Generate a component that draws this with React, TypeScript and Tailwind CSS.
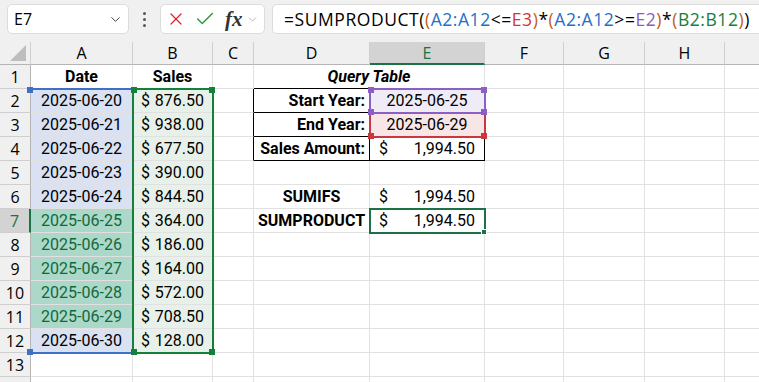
import React from "react";
import { Check, ChevronDown, X } from "lucide-react";

// Column widths in px: row header, A..I
const COLS = [31, 102, 80, 41, 116, 115, 79, 81, 80, 80];
const LETTERS = ["A", "B", "C", "D", "E", "F", "G", "H", "I"];
const ROWS = 14;
const HEADER_H = 23;
const ROW_H = 24;

const dates = [
  "2025-06-20",
  "2025-06-21",
  "2025-06-22",
  "2025-06-23",
  "2025-06-24",
  "2025-06-25",
  "2025-06-26",
  "2025-06-27",
  "2025-06-28",
  "2025-06-29",
  "2025-06-30",
];
const sales = ["876.50", "938.00", "677.50", "390.00", "844.50", "364.00", "186.00", "164.00", "572.00", "708.50", "128.00"];

const cellFont = { fontFamily: "Roboto, 'Liberation Sans', sans-serif" };

function Money({ value, wide }: { value: string; wide?: boolean }) {
  return (
    <div className={`flex h-full w-full items-center justify-between ${wide ? "px-[9px]" : "px-[8px]"}`}>
      <span>$</span>
      <span>{value}</span>
    </div>
  );
}

type Cell = { node?: React.ReactNode; border: string; bg: string; span?: number };

/** Content + styling for one data cell. Returns null when the cell is covered by a merge. */
function cellFor(row: number, col: number): Cell | null {
  // col: 1 = A ... 9 = I
  const tableBlack = row >= 2 && row <= 4 && (col === 4 || col === 5);
  let border = tableBlack ? "border-black" : "border-[#e1e1e1]";
  if (row >= 2 && row <= 4 && col === 3) border = "border-b-[#e1e1e1] border-r-black";
  const plain = (node?: React.ReactNode, bg = "bg-white"): Cell => ({ node, border, bg });

  if (row === 1) {
    if (col === 1) return plain(<div className="text-center font-bold">Date</div>);
    if (col === 2) return plain(<div className="text-center font-bold">Sales</div>);
    if (col === 4)
      return {
        node: <div className="text-center font-bold italic">Query Table</div>,
        border: "border-b-black border-r-[#e1e1e1]",
        bg: "bg-white",
        span: 2,
      };
    if (col === 5) return null;
  }
  if (row >= 2 && row <= 12) {
    const i = row - 2;
    if (col === 1) {
      const hit = row >= 7 && row <= 11;
      return plain(
        <div className="text-center">{dates[i]}</div>,
        hit ? "bg-[#acd8c9] text-[#11693a]" : "bg-[#d9e1f3]"
      );
    }
    if (col === 2) return plain(<Money value={sales[i]} />, "bg-[#e8f1e9]");
  }
  if (row === 2 && col === 4) return plain(<div className="pr-1 text-right font-bold">Start Year:</div>);
  if (row === 3 && col === 4) return plain(<div className="pr-1 text-right font-bold">End Year:</div>);
  if (row === 4 && col === 4) return plain(<div className="pr-1 text-right font-bold">Sales Amount:</div>);
  if (row === 2 && col === 5) return plain(<div className="text-center">2025-06-25</div>, "bg-[#efebf7]");
  if (row === 3 && col === 5) return plain(<div className="text-center">2025-06-29</div>, "bg-[#f8e6e6]");
  if (row === 4 && col === 5) return plain(<Money value="1,994.50" wide />);
  if (row === 6 && col === 4) return plain(<div className="text-center font-bold">SUMIFS</div>);
  if (row === 7 && col === 4) return plain(<div className="text-center font-bold">SUMPRODUCT</div>);
  if ((row === 6 || row === 7) && col === 5) return plain(<Money value="1,994.50" wide />);
  return plain();
}

type Corner = "tl" | "tr" | "bl" | "br";

const cornerCls: Record<Corner, string> = {
  tl: "-left-[3px] -top-[3px]",
  tr: "-right-[3px] -top-[3px]",
  bl: "-left-[3px] -bottom-[3px]",
  br: "-right-[3px] -bottom-[3px]",
};

/**
 * Coloured outline drawn over a cell range (formula reference highlight / active cell).
 * Its box is computed from the column & row indices.
 */
function RangeBox({
  c0,
  c1,
  r0,
  r1,
  borderCls,
  handleCls,
  handles,
}: {
  c0: number;
  c1: number;
  r0: number;
  r1: number;
  borderCls: string;
  handleCls: string;
  handles: Corner[];
}) {
  const left = COLS.slice(0, c0).reduce((a, b) => a + b, 0) - 1;
  const width = COLS.slice(c0, c1 + 1).reduce((a, b) => a + b, 0) + 2;
  const top = HEADER_H + (r0 - 1) * ROW_H - 1;
  const height = (r1 - r0 + 1) * ROW_H + 2;
  return (
    <div className={`pointer-events-none absolute ${borderCls}`} style={{ left, top, width, height }}>
      {handles.map((h) => (
        <span key={h} className={`absolute h-[6px] w-[6px] ${cornerCls[h]} ${handleCls}`} />
      ))}
    </div>
  );
}

function FormulaText() {
  const paren = "text-[#c55a11]";
  return (
    <span className="whitespace-nowrap">
      =SUMPRODUCT(
      <span className={paren}>(</span>
      <span className="text-[#1f6fc6]">A2:A12</span>
      {"<="}
      <span className="text-[#d2343a]">E3</span>
      <span className={paren}>)</span>*<span className={paren}>(</span>
      <span className="text-[#1f6fc6]">A2:A12</span>
      {">="}
      <span className="text-[#8a5cc0]">E2</span>
      <span className={paren}>)</span>*<span className={paren}>(</span>
      <span className="text-[#16803a]">B2:B12</span>
      <span className={paren}>)</span>)
    </span>
  );
}

function FormulaBar() {
  return (
    <div
      className="flex h-[42px] items-start bg-[#f0f0f0] pt-[4px] text-[16px] text-black"
      style={{ fontFamily: "'Open Sans', 'Noto Sans', sans-serif" }}
    >
      <div className="ml-[7px] flex h-[30px] w-[122px] items-center justify-between rounded-[5px] border border-[#dcdcdc] bg-white pl-[6px] pr-[5px]">
        <span>E7</span>
        <ChevronDown size={15} strokeWidth={1.6} className="text-[#444]" />
      </div>
      <div className="flex h-[30px] w-[31px] flex-col items-center justify-center gap-[3px]">
        <span className="h-[3px] w-[3px] rounded-full bg-[#555]" />
        <span className="h-[3px] w-[3px] rounded-full bg-[#555]" />
        <span className="h-[3px] w-[3px] rounded-full bg-[#555]" />
      </div>
      <div className="flex h-[30px] w-[105px] items-center rounded-[5px] border border-[#dcdcdc] bg-white pl-[5px]">
        <X size={20} strokeWidth={1.5} className="text-[#e0232b]" />
        <Check size={22} strokeWidth={1.6} className="ml-[8px] text-[#2d9a3e]" />
        <span
          className="ml-[9px] text-[21px] font-bold italic leading-none text-[#333]"
          style={{ fontFamily: "'Liberation Serif', serif" }}
        >
          fx
        </span>
        <ChevronDown size={13} strokeWidth={1.4} className="ml-[3px] text-[#a0a0a0]" />
      </div>
      <div className="ml-[7px] flex h-[30px] flex-1 items-center rounded-l-[5px] border border-r-0 border-[#dcdcdc] bg-white pl-[11px] text-[17.5px] tracking-[0.55px]">
        <FormulaText />
      </div>
    </div>
  );
}

function Sheet() {
  const cells: React.ReactNode[] = [];
  // header row
  cells.push(
    <div key="corner" className="flex items-end justify-end border-b border-r border-b-[#b5b5b5] border-r-[#cfcfcf] bg-[#f0f0f0] pb-[3px] pr-[4px]">
      <span className="h-0 w-0 border-b-[16px] border-l-[16px] border-b-[#bdbdbd] border-l-transparent" />
    </div>
  );
  LETTERS.forEach((l) => {
    const sel = l === "E";
    cells.push(
      <div
        key={`h${l}`}
        className={`flex items-center justify-center border-r border-r-[#cfcfcf] ${
          sel ? "border-b-2 border-b-[#1e7145] bg-[#d3d3d3] text-[#1e7145]" : "border-b border-b-[#b5b5b5] bg-[#f0f0f0]"
        }`}
      >
        {l === "I" ? "" : l}
      </div>
    );
  });
  for (let r = 1; r <= ROWS; r++) {
    const sel = r === 7;
    cells.push(
      <div
        key={`r${r}`}
        className={`flex items-center justify-center border-b border-b-[#cfcfcf] ${
          sel ? "border-r-2 border-r-[#1e7145] bg-[#d3d3d3] text-[#1e7145]" : "border-r border-r-[#b5b5b5] bg-[#f0f0f0]"
        }`}
      >
        {r <= 13 ? r : ""}
      </div>
    );
    for (let c = 1; c <= 9; c++) {
      const cell = cellFor(r, c);
      if (!cell) continue;
      cells.push(
        <div
          key={`c${r}-${c}`}
          className={`flex items-center whitespace-nowrap border-b border-r ${cell.border} ${cell.bg} ${
            cell.span === 2 ? "col-span-2" : ""
          }`}
          style={cellFont}
        >
          <div className="w-full">{cell.node}</div>
        </div>
      );
    }
  }

  return (
    <div className="relative">
      <div
        className="grid text-[16px] text-black"
        style={{
          gridTemplateColumns: COLS.map((w) => `${w}px`).join(" "),
          gridTemplateRows: `${HEADER_H}px repeat(${ROWS}, ${ROW_H}px)`,
          fontFamily: "'Open Sans', 'Noto Sans', sans-serif",
        }}
      >
        {cells}
      </div>

      {/* formula reference highlights */}
      <RangeBox c0={1} c1={1} r0={2} r1={12} borderCls="border-y-2 border-[#3f70c6]" handleCls="bg-[#3f70c6]" handles={["tl", "bl"]} />
      <RangeBox
        c0={2}
        c1={2}
        r0={2}
        r1={12}
        borderCls="border-2 border-[#15803a]"
        handleCls="bg-[#15803a]"
        handles={["tl", "tr", "bl", "br"]}
      />
      <RangeBox c0={5} c1={5} r0={3} r1={3} borderCls="border-2 border-[#c7383f]" handleCls="bg-[#c7383f]" handles={["bl", "br"]} />
      <RangeBox
        c0={5}
        c1={5}
        r0={2}
        r1={2}
        borderCls="border-2 border-[#8b5fc4]"
        handleCls="bg-[#8b5fc4]"
        handles={["tl", "tr", "bl", "br"]}
      />
      {/* active cell E7 */}
      <RangeBox
        c0={5}
        c1={5}
        r0={7}
        r1={7}
        borderCls="border-2 border-[#1e7145]"
        handleCls="bg-[#1e7145] border border-white"
        handles={["br"]}
      />
    </div>
  );
}

export default function App() {
  return (
    <div className="h-[382px] w-[759px] overflow-hidden bg-white">
      <FormulaBar />
      <Sheet />
    </div>
  );
}
